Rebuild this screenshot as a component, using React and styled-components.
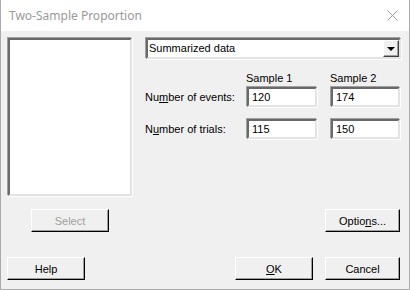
import React from 'react'
import styled, { createGlobalStyle } from 'styled-components'

const GlobalStyle = createGlobalStyle`
  html, body {
    margin: 0;
    padding: 0;
    background: #ffffff;
  }
  * {
    box-sizing: border-box;
  }
`

const Window = styled.div`
  width: 410px;
  height: 290px;
  display: flex;
  flex-direction: column;
  border: 1px solid #aaaaaa;
  border-top: none;
  font-family: "Liberation Sans", Arial, sans-serif;
  font-size: 11px;
  color: #000;
`

const TitleBar = styled.div`
  height: 31px;
  flex: none;
  display: flex;
  align-items: center;
  justify-content: space-between;
  padding: 0 11px 0 8px;
  background: #ffffff;
  font-family: "Noto Sans", "Open Sans", sans-serif;
  font-size: 12px;
  color: #999999;
`

const Body = styled.div`
  flex: 1;
  display: flex;
  flex-direction: column;
  background: #f0f0f0;
  padding: 6px 6px 0 6px;
`

const TopRow = styled.div`
  display: flex;
  gap: 13px;
`

const sunken = `
  border-style: solid;
  border-width: 2px;
  border-color: #696969 #e3e3e3 #e3e3e3 #696969;
  box-shadow: -1px -1px 0 #a0a0a0, 1px 1px 0 #ffffff;
`

const ListBox = styled.div`
  width: 124px;
  height: 158px;
  margin: 1px 0 0 1px;
  background: #ffffff;
  ${sunken}
`

const RightPanel = styled.div`
  width: 257px;
  display: flex;
  flex-direction: column;
`

const Combo = styled.div`
  height: 21px;
  display: flex;
  align-items: center;
  background: #ffffff;
  ${sunken}
  margin: 1px 1px 0 1px;
  padding-left: 1px;
`

const ComboText = styled.span`
  flex: 1;
  line-height: 15px;
`

const ComboButton = styled.div`
  width: 16px;
  height: 17px;
  display: flex;
  align-items: center;
  justify-content: center;
  background: #f0f0f0;
  border-style: solid;
  border-width: 1px;
  border-color: #ffffff #404040 #404040 #ffffff;
  box-shadow: inset -1px -1px 0 #a0a0a0;
`

const Arrow = styled.div`
  width: 0;
  height: 0;
  border-left: 4px solid transparent;
  border-right: 4px solid transparent;
  border-top: 4px solid #000;
  margin-top: 1px;
`

const FieldGrid = styled.div`
  display: grid;
  grid-template-columns: 101px 84px 71px;
  row-gap: 11px;
  margin-top: 13px;
  align-items: center;
`

const Header = styled.div`
  line-height: 13px;
  margin-bottom: -10px;
`

const Label = styled.div`
  white-space: nowrap;
`

const Input = styled.div`
  width: ${p => p.$w}px;
  height: 20px;
  background: #ffffff;
  ${sunken}
  margin: 1px 0 0 1px;
  padding: 0 0 0 3px;
  display: flex;
  align-items: center;
`

const ButtonRow = styled.div`
  display: flex;
  align-items: center;
  margin-top: ${p => p.$top}px;
  padding-left: ${p => p.$left || 0}px;
  padding-right: 3px;
  gap: 12px;
`

const Spacer = styled.div`
  flex: 1;
`

const Button = styled.div`
  width: ${p => p.$w || 77}px;
  height: 23px;
  display: flex;
  align-items: center;
  justify-content: center;
  background: #f0f0f0;
  color: ${p => (p.$disabled ? '#a0a0a0' : '#000')};
  border-style: solid;
  border-width: 1px;
  border-color: #ffffff #000000 #000000 #ffffff;
  box-shadow: inset -1px -1px 0 #a0a0a0;
`

function CloseIcon() {
  return (
    <svg width="11" height="11" viewBox="0 0 11 11">
      <path d="M0.5 0.5 L10.5 10.5 M10.5 0.5 L0.5 10.5" stroke="#9a9a9a" strokeWidth="1" />
    </svg>
  )
}

export default function App() {
  return (
    <>
      <GlobalStyle />
      <Window>
        <TitleBar>
          <span>Two-Sample Proportion</span>
          <CloseIcon />
        </TitleBar>
        <Body>
          <TopRow>
            <ListBox />
            <RightPanel>
              <Combo>
                <ComboText>Summarized data</ComboText>
                <ComboButton>
                  <Arrow />
                </ComboButton>
              </Combo>
              <FieldGrid>
                <span />
                <Header>Sample 1</Header>
                <Header>Sample 2</Header>
                <Label>Nu<u>m</u>ber of events:</Label>
                <Input $w={70}>120</Input>
                <Input $w={69}>174</Input>
                <Label>N<u>u</u>mber of trials:</Label>
                <Input $w={70}>115</Input>
                <Input $w={69}>150</Input>
              </FieldGrid>
            </RightPanel>
          </TopRow>
          <ButtonRow $top={13} $left={24}>
            <Button $w={78} $disabled>Select</Button>
            <Spacer />
            <Button $w={75}>Optio<u>n</u>s...</Button>
          </ButtonRow>
          <ButtonRow $top={25}>
            <Button $w={78}>Help</Button>
            <Spacer />
            <Button $w={78}><u>O</u>K</Button>
            <Button $w={75}>Cancel</Button>
          </ButtonRow>
        </Body>
      </Window>
    </>
  )
}
